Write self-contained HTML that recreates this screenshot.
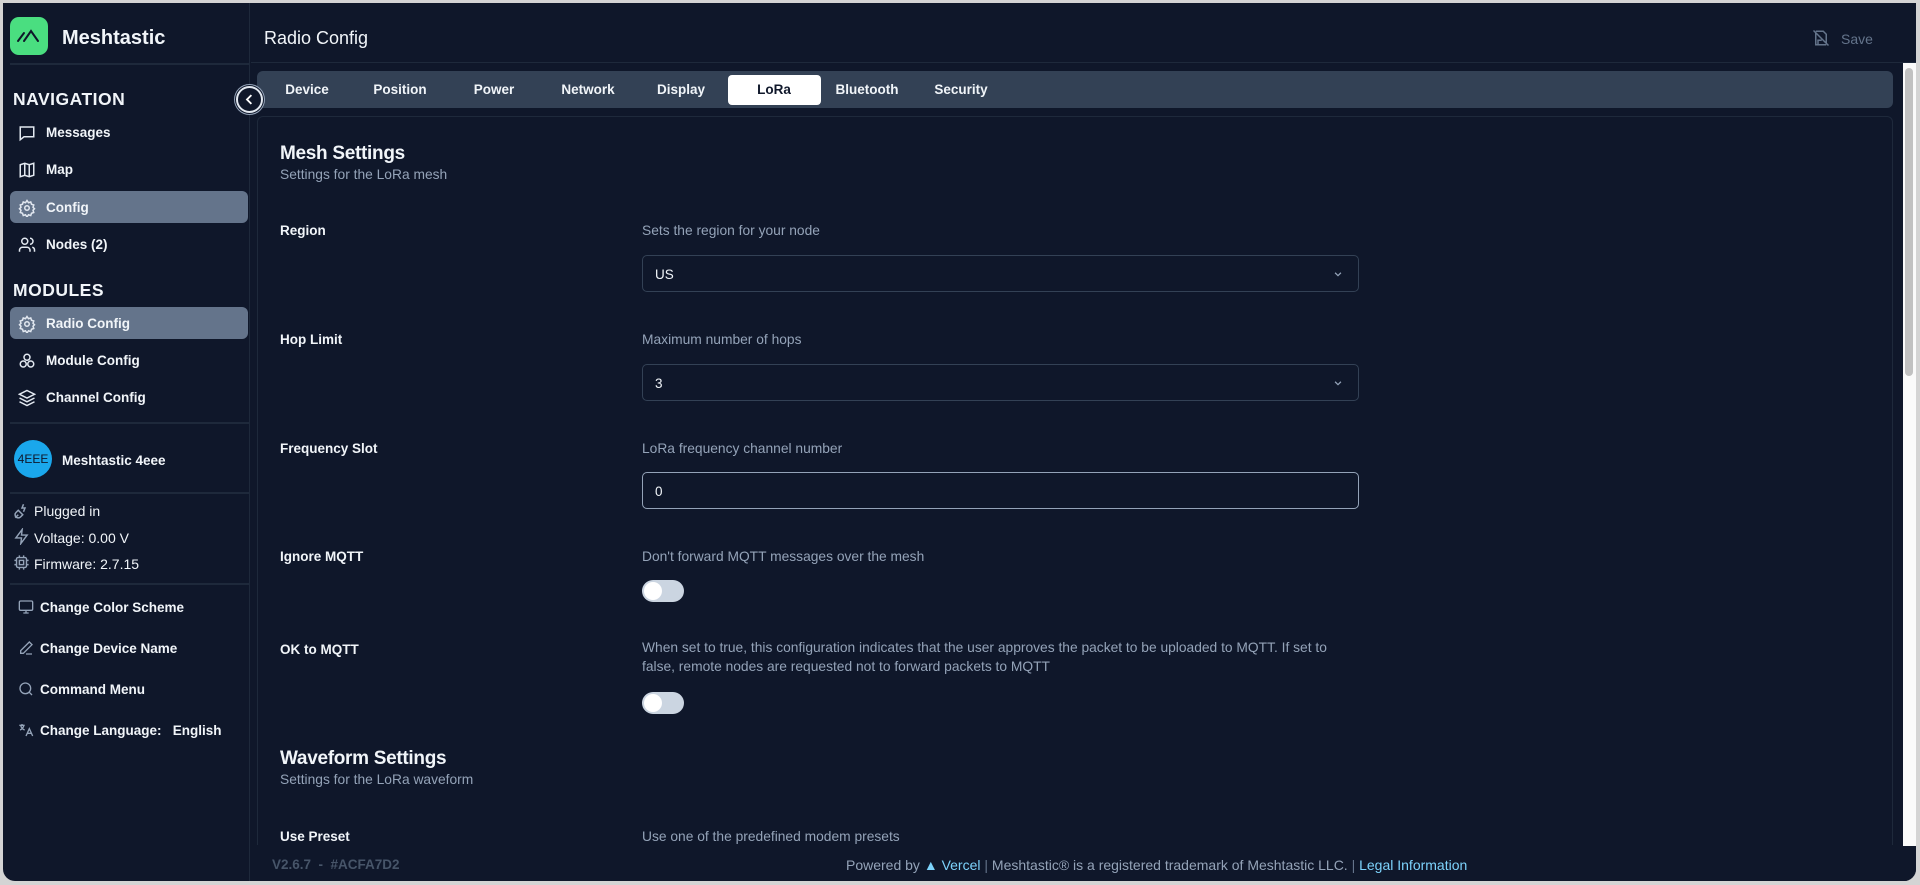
<!DOCTYPE html>
<html><head><meta charset="utf-8"><style>
*{box-sizing:border-box;margin:0;padding:0}
body{width:1920px;height:885px;background:#d4d4d4;font-family:"Liberation Sans",sans-serif;overflow:hidden;position:relative}
.app{position:absolute;left:3px;top:3px;width:1913px;height:878px;background:#0f172a;border-radius:0 0 12px 12px;overflow:hidden;color:#f1f5f9}
.abs{position:absolute}
.side{position:absolute;left:0;top:0;width:247px;height:878px;border-right:1px solid #1e293b}
.t{position:absolute;white-space:nowrap;line-height:1}
.item{position:absolute;left:7px;width:238px;height:32px;border-radius:6px}
.item.act{background:#64748b}
.hr{position:absolute;left:7px;width:240px;height:2px;background:#1e293b}
svg{position:absolute}
.lbl{font-size:13.5px;font-weight:bold}
.desc{font-size:13.8px;color:#94a3b8}
.sel{position:absolute;left:639px;width:717px;height:37px;border:1px solid #334155;border-radius:5px}
.sw{position:absolute;left:639px;width:42px;height:22px;border-radius:11px;background:#cbd5e1}
.sw:after{content:"";position:absolute;left:2px;top:2px;width:18px;height:18px;border-radius:50%;background:#fff}
.tab{position:absolute;top:79px;font-size:13.5px;font-weight:bold;transform:translateX(-50%)}
.si{font-size:13.5px;font-weight:bold}
</style></head><body>
<div class="app">
<div class="side">
  <div class="abs" style="left:7px;top:14px;width:38px;height:38px;background:#4ade80;border-radius:9px"></div>
  <svg style="left:11px;top:23px" width="30" height="20" viewBox="0 0 30 20"><path d="M4 15L10 7M10 15L17 5L24 15" stroke="#0f172a" stroke-width="2" fill="none" stroke-linecap="round"/></svg>
  <div class="t" style="left:59px;top:25px;font-size:20px;font-weight:bold">Meshtastic</div>
  <div class="hr" style="top:60px"></div>
  <div class="t" style="left:10px;top:88px;font-size:17.5px;font-weight:bold;letter-spacing:.5px">NAVIGATION</div>
  <svg style="left:15px;top:121px" width="18" height="18" viewBox="0 0 24 24" fill="none" stroke="#e2e8f0" stroke-width="2"><path d="M3 4h18v13H8l-5 4z"/></svg>
  <div class="t si" style="left:43px;top:123px">Messages</div>
  <svg style="left:15px;top:158px" width="18" height="18" viewBox="0 0 24 24" fill="none" stroke="#e2e8f0" stroke-width="2"><path d="M3 5l6-2 6 2 6-2v16l-6 2-6-2-6 2zM9 3v16M15 5v16"/></svg>
  <div class="t si" style="left:43px;top:160px">Map</div>
  <div class="item act" style="top:188px"></div>
  <svg style="left:15px;top:196px" width="18" height="18" viewBox="0 0 24 24" fill="none" stroke="#e2e8f0" stroke-width="2"><circle cx="12" cy="12" r="3"/><path d="M12 2l2 3 3-1 1 3 3 1-1 3 2 2-2 2 1 3-3 1-1 3-3-1-2 3-2-3-3 1-1-3-3-1 1-3-2-2 2-2-1-3 3-1 1-3 3 1z"/></svg>
  <div class="t si" style="left:43px;top:198px">Config</div>
  <svg style="left:15px;top:233px" width="18" height="18" viewBox="0 0 24 24" fill="none" stroke="#e2e8f0" stroke-width="2"><circle cx="9" cy="7" r="4"/><path d="M2 21v-2a4 4 0 014-4h6a4 4 0 014 4v2M16 3a4 4 0 010 8M22 21v-2a4 4 0 00-3-4"/></svg>
  <div class="t si" style="left:43px;top:235px">Nodes (2)</div>
  <div class="t" style="left:10px;top:279px;font-size:17.5px;font-weight:bold;letter-spacing:.5px">MODULES</div>
  <div class="item act" style="top:304px"></div>
  <svg style="left:15px;top:312px" width="18" height="18" viewBox="0 0 24 24" fill="none" stroke="#e2e8f0" stroke-width="2"><circle cx="12" cy="12" r="3"/><path d="M12 2l2 3 3-1 1 3 3 1-1 3 2 2-2 2 1 3-3 1-1 3-3-1-2 3-2-3-3 1-1-3-3-1 1-3-2-2 2-2-1-3 3-1 1-3 3 1z"/></svg>
  <div class="t si" style="left:43px;top:314px">Radio Config</div>
  <svg style="left:15px;top:349px" width="18" height="18" viewBox="0 0 24 24" fill="none" stroke="#e2e8f0" stroke-width="2"><circle cx="12" cy="7" r="4"/><circle cx="7" cy="16" r="4"/><circle cx="17" cy="16" r="4"/></svg>
  <div class="t si" style="left:43px;top:351px">Module Config</div>
  <svg style="left:15px;top:386px" width="18" height="18" viewBox="0 0 24 24" fill="none" stroke="#e2e8f0" stroke-width="2"><path d="M12 2l10 5-10 5L2 7zM2 12l10 5 10-5M2 17l10 5 10-5"/></svg>
  <div class="t si" style="left:43px;top:388px">Channel Config</div>
  <div class="hr" style="top:419px"></div>
  <div class="abs" style="left:11px;top:437px;width:38px;height:38px;border-radius:50%;background:#1aa7ec;color:#0f172a;font-size:12px;text-align:center;line-height:38px">4EEE</div>
  <div class="t si" style="left:59px;top:451px">Meshtastic 4eee</div>
  <div class="hr" style="top:489px"></div>
  <svg style="left:10px;top:499px" width="18" height="18" viewBox="0 0 24 24" fill="none" stroke="#94a3b8" stroke-width="2"><path d="M3 21l4-4M7 11l6 6-3 3a4 4 0 01-6-6zM14 3l-2 5h4l-2 5"/></svg>
  <div class="t" style="left:31px;top:501px;font-size:14px">Plugged in</div>
  <svg style="left:10px;top:525px" width="17" height="17" viewBox="0 0 24 24" fill="none" stroke="#94a3b8" stroke-width="2"><path d="M13 2L4 14h8l-1 8 9-12h-8z"/></svg>
  <div class="t" style="left:31px;top:528px;font-size:14px">Voltage: 0.00 V</div>
  <svg style="left:10px;top:551px" width="17" height="17" viewBox="0 0 24 24" fill="none" stroke="#94a3b8" stroke-width="2"><rect x="5" y="5" width="14" height="14" rx="2"/><rect x="9" y="9" width="6" height="6"/><path d="M9 2v3M15 2v3M9 19v3M15 19v3M2 9h3M2 15h3M19 9h3M19 15h3"/></svg>
  <div class="t" style="left:31px;top:554px;font-size:14px">Firmware: 2.7.15</div>
  <div class="hr" style="top:580px"></div>
  <svg style="left:15px;top:596px" width="16" height="16" viewBox="0 0 24 24" fill="none" stroke="#94a3b8" stroke-width="2"><rect x="2" y="3" width="20" height="14" rx="2"/><path d="M8 21h8M12 17v4"/></svg>
  <div class="t si" style="left:37px;top:598px">Change Color Scheme</div>
  <svg style="left:15px;top:637px" width="16" height="16" viewBox="0 0 24 24" fill="none" stroke="#94a3b8" stroke-width="2"><path d="M17 3l4 4L8 20H4v-4zM12 21h9"/></svg>
  <div class="t si" style="left:37px;top:639px">Change Device Name</div>
  <svg style="left:15px;top:678px" width="16" height="16" viewBox="0 0 24 24" fill="none" stroke="#94a3b8" stroke-width="2"><circle cx="11" cy="11" r="8"/><path d="M21 21l-4-4"/></svg>
  <div class="t si" style="left:37px;top:680px">Command Menu</div>
  <svg style="left:15px;top:719px" width="16" height="16" viewBox="0 0 24 24" fill="none" stroke="#94a3b8" stroke-width="2"><path d="M2 5h8M6 3v2M4 5c1 4 3 6 6 7M9 5c-1 3-3 6-6 7M12 21l5-11 5 11M14 17h6"/></svg>
  <div class="t si" style="left:37px;top:721px">Change Language:&nbsp;&nbsp; English</div>
</div>
<div class="abs" style="left:248px;top:59px;width:1665px;height:1px;background:#1e293b"></div>
<div class="t" style="left:261px;top:26px;font-size:18px">Radio Config</div>
<svg style="left:1809px;top:26px" width="18" height="18" viewBox="0 0 24 24" fill="none" stroke="#64748b" stroke-width="2"><path d="M2 2l20 20M5 3h10l4 4v12M19 21H5V5M8 21v-6h5"/></svg>
<div class="t" style="left:1838px;top:29px;font-size:14px;color:#64748b">Save</div>
<div class="abs" style="left:254px;top:68px;width:1636px;height:37px;background:#334155;border-radius:6px"></div>
<div class="abs" style="left:725px;top:72px;width:93px;height:30px;background:#fff;border-radius:4px"></div>
<div class="tab" style="left:304px">Device</div>
<div class="tab" style="left:397px">Position</div>
<div class="tab" style="left:491px">Power</div>
<div class="tab" style="left:585px">Network</div>
<div class="tab" style="left:678px">Display</div>
<div class="tab" style="left:771px;color:#0f172a">LoRa</div>
<div class="tab" style="left:864px">Bluetooth</div>
<div class="tab" style="left:958px">Security</div>
<div class="abs" style="left:233px;top:83px;width:27px;height:27px;border-radius:50%;background:#0f172a;border:2px solid #e2e8f0;box-shadow:0 0 0 1px #0f172a,0 0 0 2px #94a3b8"></div>
<svg style="left:239px;top:89px" width="15" height="15" viewBox="0 0 24 24" fill="none" stroke="#fff" stroke-width="3"><path d="M15 5l-7 7 7 7"/></svg>
<div class="abs" style="left:254px;top:113px;width:1636px;height:760px;border:1px solid #1e293b;border-radius:6px"></div>
<div class="t" style="left:277px;top:141px;font-size:19px;font-weight:bold;letter-spacing:-.3px">Mesh Settings</div>
<div class="t desc" style="left:277px;top:165px">Settings for the LoRa mesh</div>
<div class="t lbl" style="left:277px;top:221px">Region</div>
<div class="t desc" style="left:639px;top:221px">Sets the region for your node</div>
<div class="sel" style="top:252px"></div>
<div class="t" style="left:652px;top:265px;font-size:13.5px">US</div>
<svg style="left:1330px;top:266px" width="10" height="10" viewBox="0 0 24 24" fill="none" stroke="#94a3b8" stroke-width="3"><path d="M5 9l7 7 7-7"/></svg>
<div class="t lbl" style="left:277px;top:330px">Hop Limit</div>
<div class="t desc" style="left:639px;top:330px">Maximum number of hops</div>
<div class="sel" style="top:361px"></div>
<div class="t" style="left:652px;top:374px;font-size:13.5px">3</div>
<svg style="left:1330px;top:375px" width="10" height="10" viewBox="0 0 24 24" fill="none" stroke="#94a3b8" stroke-width="3"><path d="M5 9l7 7 7-7"/></svg>
<div class="t lbl" style="left:277px;top:439px">Frequency Slot</div>
<div class="t desc" style="left:639px;top:439px">LoRa frequency channel number</div>
<div class="sel" style="top:469px;border-color:#94a3b8"></div>
<div class="t" style="left:652px;top:482px;font-size:13.5px">0</div>
<div class="t lbl" style="left:277px;top:547px">Ignore MQTT</div>
<div class="t desc" style="left:639px;top:547px">Don't forward MQTT messages over the mesh</div>
<div class="sw" style="top:577px"></div>
<div class="t lbl" style="left:277px;top:640px">OK to MQTT</div>
<div class="t desc" style="left:639px;line-height:19px;top:635px">When set to true, this configuration indicates that the user approves the packet to be uploaded to MQTT. If set to<br>false, remote nodes are requested not to forward packets to MQTT</div>
<div class="sw" style="top:689px"></div>
<div class="t" style="left:277px;top:746px;font-size:19px;font-weight:bold;letter-spacing:-.3px">Waveform Settings</div>
<div class="t desc" style="left:277px;top:770px">Settings for the LoRa waveform</div>
<div class="t lbl" style="left:277px;top:827px">Use Preset</div>
<div class="t desc" style="left:639px;top:827px">Use one of the predefined modem presets</div>
<div class="abs" style="left:248px;top:842px;width:1665px;height:40px;background:#0f172a"></div>
<div class="t" style="left:269px;top:855px;font-size:13.5px;color:#475569;font-weight:bold">V2.6.7 &nbsp;- &nbsp;#ACFA7D2</div>
<div class="t" style="left:843px;top:855px;font-size:14px;color:#94a3b8">Powered by <span style="color:#7dd3fc">▲ Vercel</span> <span style="color:#64748b">|</span> Meshtastic® is a registered trademark of Meshtastic LLC. <span style="color:#64748b">|</span> <span style="color:#7dd3fc">Legal Information</span></div>
<div class="abs" style="left:1900px;top:60px;width:13px;height:783px;background:#fafafa"></div>
<div class="abs" style="left:1902px;top:65px;width:8px;height:308px;background:#c1c1c1;border-radius:4px"></div>
</div>
</body></html>
